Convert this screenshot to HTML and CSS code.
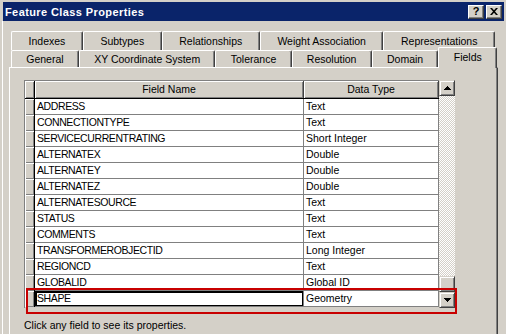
FILE: index.html
```html
<!DOCTYPE html>
<html>
<head>
<meta charset="utf-8">
<title>Feature Class Properties</title>
<link rel="stylesheet" href="styles.css">
</head>
<body>
<div class="window">
	<div class="titlebar">
		<span class="title">Feature Class Properties</span>
		<div class="caption-btns">
			<span class="cbtn help">?</span>
			<span class="cbtn close"><svg width="8" height="7" viewBox="0 0 8 7"><path d="M0 0h2l2 2.3 2-2.3h2L5 3.5 8 7H6L4 4.7 2 7H0l3-3.5z"/></svg></span>
		</div>
	</div>
	<div class="client">
		<div class="tabs">
			<div class="tab-row back">
				<div class="tab">Indexes</div>
				<div class="tab">Subtypes</div>
				<div class="tab">Relationships</div>
				<div class="tab">Weight Association</div>
				<div class="tab">Representations</div>
			</div>
			<div class="tab-row front">
				<div class="tab">General</div>
				<div class="tab">XY Coordinate System</div>
				<div class="tab">Tolerance</div>
				<div class="tab">Resolution</div>
				<div class="tab">Domain</div>
				<div class="tab active">Fields</div>
			</div>
		</div>
		<div class="panel">
			<div class="grid">
				<div class="grid-main">
					<div class="row head">
						<div class="rh"></div>
						<div class="hc c-name">Field Name</div>
						<div class="hc c-type">Data Type</div>
					</div>
					<div class="row"><div class="rh"></div><div class="cell c-name">ADDRESS</div><div class="cell c-type">Text</div></div>
					<div class="row"><div class="rh"></div><div class="cell c-name">CONNECTIONTYPE</div><div class="cell c-type">Text</div></div>
					<div class="row"><div class="rh"></div><div class="cell c-name">SERVICECURRENTRATING</div><div class="cell c-type">Short Integer</div></div>
					<div class="row"><div class="rh"></div><div class="cell c-name">ALTERNATEX</div><div class="cell c-type">Double</div></div>
					<div class="row"><div class="rh"></div><div class="cell c-name">ALTERNATEY</div><div class="cell c-type">Double</div></div>
					<div class="row"><div class="rh"></div><div class="cell c-name">ALTERNATEZ</div><div class="cell c-type">Double</div></div>
					<div class="row"><div class="rh"></div><div class="cell c-name">ALTERNATESOURCE</div><div class="cell c-type">Text</div></div>
					<div class="row"><div class="rh"></div><div class="cell c-name">STATUS</div><div class="cell c-type">Text</div></div>
					<div class="row"><div class="rh"></div><div class="cell c-name">COMMENTS</div><div class="cell c-type">Text</div></div>
					<div class="row"><div class="rh"></div><div class="cell c-name">TRANSFORMEROBJECTID</div><div class="cell c-type">Long Integer</div></div>
					<div class="row"><div class="rh"></div><div class="cell c-name">REGIONCD</div><div class="cell c-type">Text</div></div>
					<div class="row"><div class="rh"></div><div class="cell c-name">GLOBALID</div><div class="cell c-type">Global ID</div></div>
					<div class="row current"><div class="rh"></div><div class="cell c-name">SHAPE</div><div class="cell c-type">Geometry</div></div>
				</div>
				<div class="vscroll">
					<div class="sbtn"><svg width="7" height="4" viewBox="0 0 7 4"><path d="M3 0h1v1h1v1h1v1h1v1H0V3h1V2h1V1h1z"/></svg></div>
					<div class="track"></div>
					<div class="sbtn"></div>
					<div class="sbtn"><svg width="7" height="4" viewBox="0 0 7 4"><path d="M0 0h7v1H6v1H5v1H4v1H3V3H2V2H1V1H0z"/></svg></div>
				</div>
			</div>
			<p class="hint">Click any field to see its properties.</p>
		</div>
	</div>
	<div class="annot"></div>
</div>
</body>
</html>
```
FILE: styles.css
```css
* {
	box-sizing: border-box;
	margin: 0;
	padding: 0;
}
html,body {
	height: 100%;
	overflow: hidden;
}
body {
	background: #d4d0c8;
	color: #000;
	font-family: "Liberation Sans", Arial, sans-serif;
	font-size: 10.5px;
}

.window {
	position: relative;
	height: 100%;
	padding: 2px 2px 0 2px;
}

/* caption */
.titlebar {
	height: 19px;
	margin-left: 1px;
	padding: 0 2px;
	background: #0a246a;
	display: flex;
	align-items: center;
	justify-content: space-between;
}
.title {
	color: #fff;
	font-weight: bold;
	font-size: 11px;
	letter-spacing: 0.4px;
	padding-top: 1px;
}
.caption-btns {
	display: flex;
	gap: 2px;
}
.cbtn {
	width: 16px;
	height: 14px;
	background: #d4d0c8;
	border: 1px solid;
	border-color: #fff #404040 #404040 #fff;
	box-shadow: inset -1px -1px #808080;
	display: flex;
	align-items: center;
	justify-content: center;
}
.help {
	font-weight: bold;
	font-size: 11px;
	line-height: 1;
}

.client {
	height: calc(100% - 19px);
	border-left: 1px solid #fff;
	padding-top: 10px;
}

/* tabs */
.tabs {
	margin-left: 8px;
}
.tab-row {
	display: flex;
}
.tab-row.back {
	width: 484px;
	height: 19px;
}
.tab-row.front {
	width: 486px;
	height: 17px;
	align-items: flex-end;
}
.tab {
	flex: 1 1 auto;
	padding: 0 12px;
	text-align: center;
	white-space: nowrap;
	background: #d4d0c8;
	border-top: 1px solid #fff;
	border-left: 1px solid #fff;
	border-right: 1px solid #404040;
	box-shadow: inset -1px 0 #808080;
	border-radius: 2px 2px 0 0;
}
.back .tab {
	line-height: 18px;
}
.front .tab {
	height: 17px;
	line-height: 16px;
}
.front .tab.active {
	height: 21px;
	padding-top: 1px;
	margin-bottom: -1px;
	position: relative;
	z-index: 1;
}

/* page */
.panel {
	width: 489px;
	height: 267px;
	margin-left: 6px;
	padding: 12px 0 0 14px;
	border-top: 1px solid #fff;
	border-left: 1px solid #fff;
	border-right: 1px solid #404040;
	box-shadow: inset -1px 0 #808080;
}

.grid {
	display: flex;
	width: 431px;
}
.grid-main {
	width: 415px;
	border-top: 1px solid #808080;
	border-left: 1px solid #808080;
}
.row {
	display: flex;
	height: 16px;
}
.row.head {
	height: 18px;
	border-bottom: 1px solid #000;
}
.rh {
	width: 10px;
	flex: none;
	background: #d4d0c8;
	border-right: 1px solid #000;
	box-shadow: inset 1px 1px #fff, inset -1px -1px #808080;
}
.c-name {
	width: 269px;
	flex: none;
}
.c-type {
	width: 135px;
	flex: none;
}
.hc {
	background: #d4d0c8;
	text-align: center;
	line-height: 17px;
	border-right: 1px solid #404040;
	box-shadow: inset 1px 1px #fff, inset -1px -1px #808080;
}
.cell {
	background: #fff;
	padding-left: 2px;
	line-height: 15px;
	white-space: nowrap;
	overflow: hidden;
	border-right: 1px solid #808080;
	border-bottom: 1px solid #808080;
}
.cell.c-name {
	letter-spacing: -0.4px;
}
.current .cell.c-name {
	box-shadow: inset 0 0 0 1px #000, inset 1px 1px 0 1px #000;
}

.vscroll {
	width: 16px;
	display: flex;
	flex-direction: column;
}
.sbtn {
	height: 16px;
	background: #d4d0c8;
	border: 1px solid;
	border-color: #d4d0c8 #404040 #404040 #d4d0c8;
	box-shadow: inset 1px 1px #fff, inset -1px -1px #808080;
	display: flex;
	align-items: center;
	justify-content: center;
}
.track {
	height: 180px;
	background: repeating-conic-gradient(#fff 0 25%, #d4d0c8 0 50%) 0 0 / 2px 2px;
}

.hint {
	margin-top: 11px;
	line-height: 13px;
}

/* red highlight drawn over the grid */
.annot {
	position: absolute;
	left: 26px;
	top: 288px;
	width: 431px;
	height: 26px;
	border: 2px solid #c80000;
}
```
